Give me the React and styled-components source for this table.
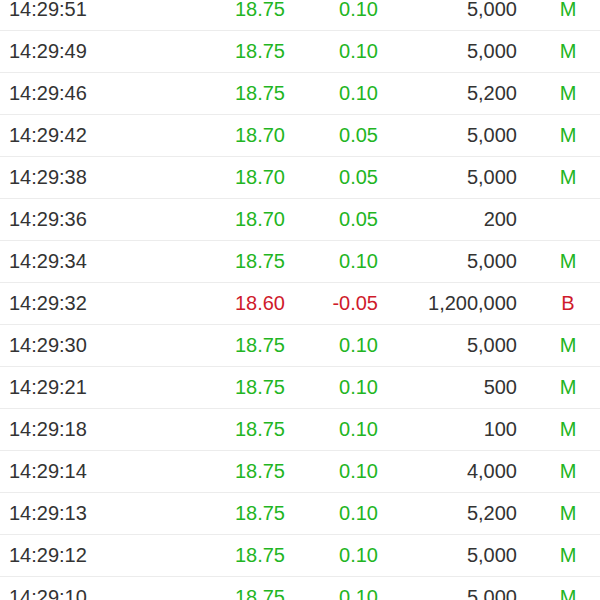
import React from 'react';
import styled, { createGlobalStyle } from 'styled-components';

const GlobalStyle = createGlobalStyle`
  html, body { margin: 0; padding: 0; background: #fff; }
  body { font-family: "Liberation Sans", Arial, sans-serif; overflow: hidden; }
`;

const GREEN = '#22b522';
const RED = '#cf1a2b';

// list of ticks, first row scrolled partly out of view
const TickList = styled.div`
  margin-top: -11px;
  width: 600px;
`;

const Row = styled.div`
  display: grid;
  grid-template-columns: 185px 100px 93px 139px 83px;
  align-items: center;
  height: 41px;
  border-bottom: 1px solid #ececec;
  font-size: 20px;
  color: #333;
`;

const Time = styled.span`
  padding-left: 9px;
`;

const Num = styled.span`
  text-align: right;
  color: ${p => p.$color || '#333'};
`;

const Flag = styled.span`
  text-align: center;
  padding-left: 19px;
  color: ${p => (p.$type === 'B' ? RED : GREEN)};
`;

const ticks = [
  ['14:29:51', '18.75', '0.10', '5,000', 'M'],
  ['14:29:49', '18.75', '0.10', '5,000', 'M'],
  ['14:29:46', '18.75', '0.10', '5,200', 'M'],
  ['14:29:42', '18.70', '0.05', '5,000', 'M'],
  ['14:29:38', '18.70', '0.05', '5,000', 'M'],
  ['14:29:36', '18.70', '0.05', '200', ''],
  ['14:29:34', '18.75', '0.10', '5,000', 'M'],
  ['14:29:32', '18.60', '-0.05', '1,200,000', 'B'],
  ['14:29:30', '18.75', '0.10', '5,000', 'M'],
  ['14:29:21', '18.75', '0.10', '500', 'M'],
  ['14:29:18', '18.75', '0.10', '100', 'M'],
  ['14:29:14', '18.75', '0.10', '4,000', 'M'],
  ['14:29:13', '18.75', '0.10', '5,200', 'M'],
  ['14:29:12', '18.75', '0.10', '5,000', 'M'],
  ['14:29:10', '18.75', '0.10', '5,000', 'M'],
];

const App = () => (
  <>
    <GlobalStyle />
    <TickList>
      {ticks.map(([time, price, change, vol, flag]) => {
        const c = change.startsWith('-') ? RED : GREEN;
        return (
          <Row key={time}>
            <Time>{time}</Time>
            <Num $color={c}>{price}</Num>
            <Num $color={c}>{change}</Num>
            <Num>{vol}</Num>
            <Flag $type={flag}>{flag}</Flag>
          </Row>
        );
      })}
    </TickList>
  </>
);

export default App;
